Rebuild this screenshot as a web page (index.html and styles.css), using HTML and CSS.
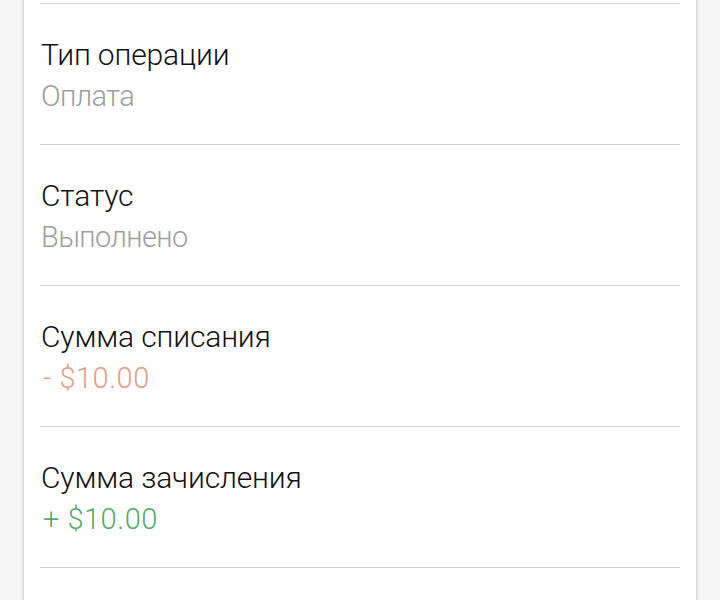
FILE: index.html
```html
<!DOCTYPE html>
<html lang="ru">
<head>
<meta charset="utf-8">
<link rel="stylesheet" href="styles.css">
</head>
<body>
<div class="card">
  <div class="row">
    <div class="label">Тип операции</div>
    <div class="value">Оплата</div>
  </div>
  <div class="row">
    <div class="label">Статус</div>
    <div class="value">Выполнено</div>
  </div>
  <div class="row">
    <div class="label">Сумма списания</div>
    <div class="value amount debit">- $10.00</div>
  </div>
  <div class="row">
    <div class="label">Сумма зачисления</div>
    <div class="value amount credit">+ $10.00</div>
  </div>
  <div class="row"></div>
</div>
</body>
</html>
```
FILE: styles.css
```css
html, body {
  margin: 0;
  padding: 0;
  background: #f6f6f6;
  height: 600px;
  overflow: hidden;
}
body {
  font-family: Roboto, "Liberation Sans", sans-serif;
}
.card {
  margin: -20px 0 0 24px;
  width: 672px;
  padding: 23px 16px 0;
  box-sizing: border-box;
  background: #fff;
  box-shadow: 0 0 4px rgba(0,0,0,0.28);
  height: 640px;
}
.row {
  border-top: 1px solid #d2d2d2;
  height: 141px;
  box-sizing: border-box;
  padding-top: 31px;
  padding-left: 1px;
}
.label {
  font-size: 30px;
  font-weight: 300;
  letter-spacing: -0.15px;
  line-height: 40px;
  color: #111;
}
.value {
  font-size: 29px;
  font-weight: 300;
  line-height: 40px;
  color: #9e9e9e;
  letter-spacing: -0.6px;
  margin-top: 1px;
}
.value.amount {
  letter-spacing: 0.5px;
  padding-left: 2px;
}
.value.debit { color: #e39e88; }
.value.credit { color: #55aa6a; }
```
